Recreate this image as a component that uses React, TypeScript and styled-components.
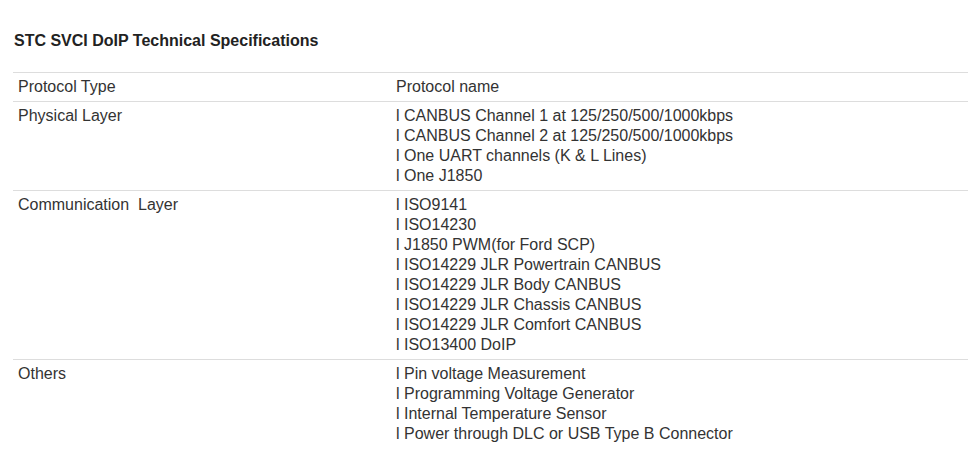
import styled, { createGlobalStyle } from "styled-components";

const GlobalStyle = createGlobalStyle`
  html, body {
    margin: 0;
    padding: 0;
    background: #ffffff;
    overflow: hidden;
  }
  body {
    font-family: "Liberation Sans", Arial, sans-serif;
    color: #333333;
  }
`;

const Page = styled.div`
  width: 968px;
  height: 476px;
  padding: 31px 0 0 13px;
  box-sizing: border-box;
`;

const Title = styled.h3`
  margin: 0 0 21px 1px;
  font-size: 16px;
  line-height: 20px;
  font-weight: bold;
  color: #222222;
`;

const Table = styled.div`
  width: 970px;
`;

const Row = styled.div`
  display: grid;
  grid-template-columns: 378px 1fr;
  border-top: 1px solid #dddddd;
`;

const Cell = styled.div`
  padding: 4px 5px;
  font-size: 16px;
  line-height: 20px;
`;

const Line = styled.div`
  white-space: pre;
`;

const rows: { type: string; names: string[] }[] = [
  { type: "Protocol Type", names: ["Protocol name"] },
  {
    type: "Physical Layer",
    names: [
      "l CANBUS Channel 1 at 125/250/500/1000kbps",
      "l CANBUS Channel 2 at 125/250/500/1000kbps",
      "l One UART channels (K & L Lines)",
      "l One J1850",
    ],
  },
  {
    type: "Communication  Layer",
    names: [
      "l ISO9141",
      "l ISO14230",
      "l J1850 PWM(for Ford SCP)",
      "l ISO14229 JLR Powertrain CANBUS",
      "l ISO14229 JLR Body CANBUS",
      "l ISO14229 JLR Chassis CANBUS",
      "l ISO14229 JLR Comfort CANBUS",
      "l ISO13400 DoIP",
    ],
  },
  {
    type: "Others",
    names: [
      "l Pin voltage Measurement",
      "l Programming Voltage Generator",
      "l Internal Temperature Sensor",
      "l Power through DLC or USB Type B Connector",
    ],
  },
];

export default function App() {
  return (
    <Page>
      <GlobalStyle />
      <Title>STC SVCI DoIP Technical Specifications</Title>
      <Table>
        {rows.map((r) => (
          <Row key={r.type}>
            <Cell>
              <Line>{r.type}</Line>
            </Cell>
            <Cell>
              {r.names.map((n) => (
                <Line key={n}>{n}</Line>
              ))}
            </Cell>
          </Row>
        ))}
      </Table>
    </Page>
  );
}
